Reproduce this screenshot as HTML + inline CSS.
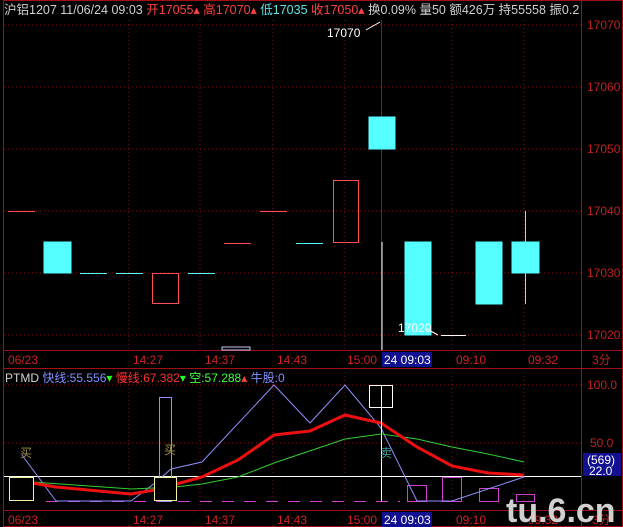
<!DOCTYPE html><html><head><meta charset="utf-8"><style>
body{margin:0;background:#000;width:623px;height:527px;overflow:hidden}
svg{display:block}
text{font-family:"Liberation Sans","Noto Sans CJK SC",sans-serif;font-size:12px}
</style></head><body>
<svg width="623" height="527" viewBox="0 0 623 527">
<defs><clipPath id="hc"><rect x="0" y="0" width="581" height="20"/></clipPath></defs>
<rect width="623" height="527" fill="#000"/>
<g stroke="#a01010" fill="none">
<rect x="3.5" y="0.5" width="619" height="526"/>
<line x1="581.5" y1="0" x2="581.5" y2="527"/>
<line x1="3" y1="350.5" x2="623" y2="350.5"/>
<line x1="3" y1="368.5" x2="623" y2="368.5"/>
<line x1="3" y1="510.5" x2="623" y2="510.5"/>
<line x1="381.5" y1="20" x2="381.5" y2="350"/>
</g>
<g stroke="#8a1010" stroke-dasharray="1,3">
<line x1="129" y1="20" x2="129" y2="350"/><line x1="200" y1="20" x2="200" y2="350"/><line x1="273" y1="20" x2="273" y2="350"/><line x1="345" y1="20" x2="345" y2="350"/><line x1="452" y1="20" x2="452" y2="350"/><line x1="524" y1="20" x2="524" y2="350"/>
<line x1="129" y1="372" x2="129" y2="510"/><line x1="200" y1="372" x2="200" y2="510"/><line x1="273" y1="372" x2="273" y2="510"/><line x1="345" y1="372" x2="345" y2="510"/><line x1="452" y1="372" x2="452" y2="510"/><line x1="524" y1="372" x2="524" y2="510"/>
<line x1="4" y1="25" x2="581" y2="25"/><line x1="4" y1="87" x2="581" y2="87"/><line x1="4" y1="149" x2="581" y2="149"/><line x1="4" y1="211" x2="581" y2="211"/><line x1="4" y1="273" x2="581" y2="273"/><line x1="4" y1="335" x2="581" y2="335"/>
<line x1="4" y1="385" x2="581" y2="385"/><line x1="4" y1="443" x2="581" y2="443"/>
</g>
<g fill="#c02020">
<text x="587" y="29">17070</text><text x="587" y="91">17060</text><text x="587" y="153">17050</text><text x="587" y="215">17040</text><text x="587" y="277">17030</text><text x="587" y="339">17020</text>
<text x="587" y="389">100.0</text><text x="590" y="447">50.0</text><text x="592" y="364">3分</text><text x="592" y="524">3分</text>
</g>
<text x="4" y="14" fill="#d0d0d0" clip-path="url(#hc)" style="font-size:12.5px">沪铝1207 11/06/24 09:03 <tspan fill="#ff4040">开17055▴ 高17070▴</tspan> <tspan fill="#60e0e0">低17035</tspan> <tspan fill="#ff4040">收17050▴</tspan> 换0.09% 量50 额426万 持55558 振0.2</text>
<g stroke="#ff5050" fill="none">
<line x1="8" y1="211.5" x2="35" y2="211.5"/>
<rect x="152.5" y="273.5" width="26" height="30"/>
<line x1="224" y1="243.5" x2="251" y2="243.5"/>
<line x1="260" y1="211.5" x2="287" y2="211.5"/>
<rect x="333.5" y="180.5" width="25" height="62"/>
</g>
<g fill="#55ffff" stroke="#55ffff">
<rect x="44" y="242" width="27" height="31"/>
<line x1="80" y1="273.5" x2="107" y2="273.5"/><line x1="116" y1="273.5" x2="143" y2="273.5"/><line x1="188" y1="273.5" x2="215" y2="273.5"/><line x1="296" y1="243.5" x2="323" y2="243.5"/>
<rect x="369" y="117" width="26" height="32"/>
<rect x="405" y="242" width="26" height="93"/>
<rect x="476" y="242" width="26" height="62"/>
<line x1="525.5" y1="211" x2="525.5" y2="304"/>
<rect x="512" y="242" width="27" height="31"/>
</g>
<line x1="382" y1="242" x2="382" y2="350" stroke="#fff"/>
<line x1="441" y1="335.5" x2="466" y2="335.5" stroke="#fff"/>
<line x1="366" y1="30" x2="380" y2="22" stroke="#fff"/>
<text x="327" y="37" fill="#fff">17070</text>
<line x1="425" y1="328" x2="438" y2="335" stroke="#fff"/>
<text x="398" y="332" fill="#fff">17020</text>
<rect x="222" y="347" width="28" height="3" fill="none" stroke="#c8c8ff"/>
<g fill="#d02020" style="font-size:12.5px">
<text x="8" y="364">06/23</text><text x="133" y="364">14:27</text><text x="205" y="364">14:37</text><text x="277" y="364">14:43</text><text x="347" y="364">15:00</text><text x="456" y="364">09:10</text><text x="528" y="364">09:32</text>
<text x="8" y="524">06/23</text><text x="133" y="524">14:27</text><text x="205" y="524">14:37</text><text x="277" y="524">14:43</text><text x="347" y="524">15:00</text><text x="456" y="524">09:10</text><text x="528" y="524">09:32</text>
</g>
<rect x="382" y="352" width="50" height="15" fill="#101090"/><text x="384" y="364" fill="#fff">24 09:03</text>
<rect x="382" y="512" width="50" height="15" fill="#101090"/><text x="384" y="524" fill="#fff">24 09:03</text>
<text x="5" y="382" fill="#d0d0d0">PTMD <tspan fill="#8090ff">快线:55.556</tspan><tspan fill="#20ff20">▾</tspan> <tspan fill="#ff3030">慢线:67.382</tspan><tspan fill="#20ff20">▾</tspan> <tspan fill="#40ff40">空:57.288</tspan><tspan fill="#ff4040">▴</tspan> <tspan fill="#8090ff">牛股:0</tspan></text>
<line x1="4" y1="476.5" x2="581" y2="476.5" stroke="#fff"/>
<g stroke="#d040d0" stroke-dasharray="12,10"><line x1="46" y1="501.5" x2="400" y2="501.5"/></g>
<g stroke="#d040d0" fill="none">
<rect x="407.5" y="485.5" width="19" height="16"/><rect x="442.5" y="477.5" width="19" height="24"/><rect x="479.5" y="488.5" width="19" height="13"/><rect x="516.5" y="494.5" width="18" height="7"/>
</g>
<rect x="159.5" y="397.5" width="12" height="104" fill="none" stroke="#9090ff"/>
<polyline points="22,455 56,501 131,501 155,483 171,469 202,462 274,385 310,423 345,385 381,428 417,501 452,501 524,477" fill="none" stroke="#9090ff"/>
<polyline points="32,482 131,489 175,487 202,484 238,477 274,463 345,439 381,434 417,439 452,447 488,454 524,462" fill="none" stroke="#30d030"/>
<polyline points="32,483 56,487 131,494 155,490 202,477 238,460 274,435 310,431 345,415 381,423 417,447 452,466 488,473 524,475" fill="none" stroke="#ee1010" stroke-width="3"/>
<rect x="9.5" y="477.5" width="24" height="23" fill="#000" stroke="#f0f0a0"/>
<rect x="154.5" y="477.5" width="22" height="23" fill="#000" stroke="#f0f0a0"/>
<rect x="369.5" y="385.5" width="23" height="22" fill="none" stroke="#fff"/>
<line x1="381.5" y1="385" x2="381.5" y2="501" stroke="#fff"/>
<text x="20" y="457" fill="#a09040">买</text><text x="164" y="454" fill="#a09040">买</text><text x="380" y="457" fill="#40a0a0">卖</text>
<rect x="583" y="453" width="38" height="23" fill="#101090"/>
<text x="587" y="464" fill="#fff">(569)</text><text x="589" y="475" fill="#fff">22.0</text>
<text x="506" y="522" fill="#d0d0d0" style="font-size:34px;font-weight:bold">tu.6.cn</text>
</svg>
</body></html>
